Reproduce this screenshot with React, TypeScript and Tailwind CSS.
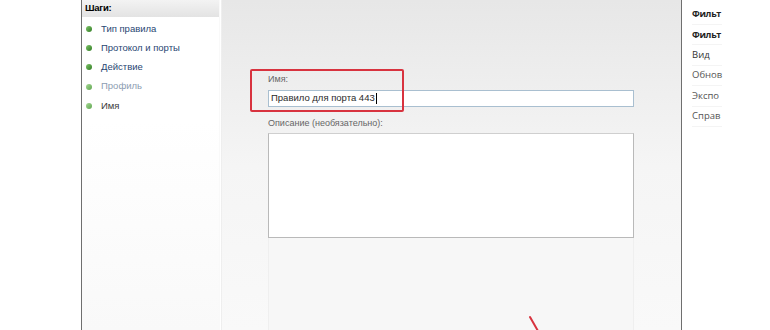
import React from "react";

const steps = [
  { label: "Тип правила", text: "text-[#284672]", dot: "from-[#7fc46a] to-[#2f7d22]" },
  { label: "Протокол и порты", text: "text-[#284672]", dot: "from-[#7fc46a] to-[#2f7d22]" },
  { label: "Действие", text: "text-[#284672]", dot: "from-[#7fc46a] to-[#2f7d22]" },
  { label: "Профиль", text: "text-[#8d9db2]", dot: "from-[#a6d894] to-[#5fa650]" },
  { label: "Имя", text: "text-[#3a3a3a]", dot: "from-[#a6d894] to-[#5fa650]" },
];

const actions = [
  { label: "Фильт", bold: true },
  { label: "Фильт", bold: true },
  { label: "Вид", bold: false, dark: true },
  { label: "Обнов", bold: false },
  { label: "Экспо", bold: false },
  { label: "Справ", bold: false },
];

export default function App() {
  return (
    <div className="relative flex h-[330px] w-[770px] overflow-hidden bg-white font-['Liberation_Sans',Arial,sans-serif]">
      {/* white margin left */}
      <div className="w-[81px] shrink-0 bg-white" />

      {/* dialog */}
      <div className="flex h-full w-[601px] shrink-0 border-x border-[#6f6f6f]">
        {/* steps pane */}
        <div className="flex w-[137px] shrink-0 flex-col bg-[#fbfbfb]">
          <div className="flex h-[17px] items-center bg-gradient-to-b from-[#f3f3f3] to-[#e3e3e3] pl-[3px] text-[9.5px] font-bold tracking-[-0.3px] text-black">
            Шаги:
          </div>
          <div className="flex flex-col bg-white pb-[6px] pt-[2px]">
            {steps.map((s) => (
              <div key={s.label} className="flex h-[19.3px] items-center">
                <span
                  className={`ml-[4px] h-[6px] w-[6px] rounded-full bg-gradient-to-br ${s.dot}`}
                />
                <span className={`ml-[9px] text-[9.5px] ${s.text}`}>{s.label}</span>
              </div>
            ))}
          </div>
          <div className="flex-1 bg-gradient-to-b from-white to-[#f9f9f9]" />
        </div>

        {/* separator */}
        <div className="w-[3px] shrink-0 bg-gradient-to-r from-[#f6f6f6] via-white to-[#e6e6e6]" />

        {/* content */}
        <div className="relative flex flex-1 flex-col bg-gradient-to-b from-[#e7e7e7] via-[#f5f5f5] to-[#f9f9f9] pl-[46px] pr-[47px]">
          <div className="mt-[72px] h-[14px] text-[9px] leading-[14px] text-[#666]">Имя:</div>
          <div className="mt-[4px] flex h-[17px] items-center border border-[#a9bfd0] bg-white pl-[2px] text-[9.5px] text-[#2a2a2a]">
            Правило для порта 443
            <span className="ml-[1px] h-[11px] w-px bg-black" />
          </div>
          <div className="mt-[9px] h-[14px] text-[9px] leading-[14px] text-[#666]">
            Описание (необязательно):
          </div>
          <div className="mt-[3px] h-[105px] border border-[#b9b9b9] border-t-[#cfcfcf] bg-white" />
          <div className="flex-1 border-x border-[#efefef] bg-[#f7f7f7]" />

          {/* red annotation box */}
          <div className="absolute left-[28px] top-[69px] h-[43px] w-[154px] rounded-[2px] border-2 border-[#d8333f]" />
        </div>
      </div>

      {/* actions pane */}
      <div className="flex w-[42px] shrink-0 flex-col overflow-hidden bg-white pl-[10px] font-['Open_Sans',sans-serif]">
        {actions.map((a, i) => (
          <div
            key={i}
            className={`flex h-[20.5px] w-[30px] shrink-0 items-center whitespace-nowrap border-b border-[#f4f4f4] ${
              a.bold
                ? "text-[9px] font-bold tracking-[-0.3px] text-[#222]"
                : a.dark
                  ? "text-[9.5px] text-[#333]"
                  : "text-[9.5px] text-[#555]"
            } ${i === 0 ? "mt-[4px]" : ""}`}
          >
            {a.label}
          </div>
        ))}
      </div>
      <div className="flex-1 bg-white" />

      {/* red arrow stroke */}
      <svg className="absolute left-[525px] top-[314px]" width="20" height="16" viewBox="0 0 20 16">
        <line x1="5" y1="3" x2="13" y2="17" stroke="#d8333f" strokeWidth="2" strokeLinecap="round" />
      </svg>
    </div>
  );
}
